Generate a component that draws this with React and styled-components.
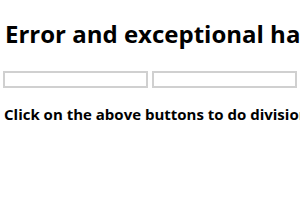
import React from 'react';
import styled, { createGlobalStyle } from 'styled-components';

const Global = createGlobalStyle`
    body {
        margin: 0;
        background: #ffffff;
        font-family: 'Open Sans', 'Noto Sans', sans-serif;
        color: #000000;
    }
`

let Page = styled.div`
    padding: 0 4px;
    overflow: hidden;
    width: 300px;
    box-sizing: border-box;
`
let Title = styled.h1`
    font-size: 24px;
    font-weight: 700;
    margin: 20px 0 22px 1px;
    white-space: nowrap;
    line-height: 1.2;
`
let Inputs = styled.div`
    display: flex;
    gap: 4px;
    margin-left: -1px;
`
let Field = styled.input`
    width: 145px;
    height: 17px;
    box-sizing: border-box;
    border: 2px solid #d0d0d0;
    padding: 0 3px;
    font-family: inherit;
    outline: none;
`
let Message = styled.p`
    font-size: 15px;
    font-weight: 700;
    margin: 16px 0 0 0;
    white-space: nowrap;
`

function App() {
    return (
        <Page>
            <Global />
            <Title>Error and exceptional handling</Title>
            <Inputs>
                <Field type="text" />
                <Field type="text" />
            </Inputs>
            <Message>Click on the above buttons to do division</Message>
        </Page>
    );
}

export default App;
